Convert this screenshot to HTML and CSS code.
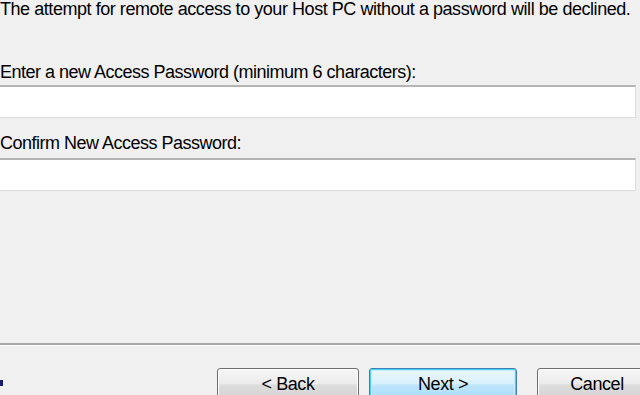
FILE: index.html
```html
<!DOCTYPE html>
<html>
<head>
<meta charset="utf-8">
<link rel="stylesheet" href="styles.css">
</head>
<body>
<div class="dialog">
  <p class="intro">The attempt for remote access to your Host PC without a password will be declined.</p>
  <label class="label first">Enter a new Access Password (minimum 6 characters):</label>
  <div class="field"></div>
  <label class="label second">Confirm New Access Password:</label>
  <div class="field confirm"></div>
  <div class="spacer"></div>
  <div class="separator"></div>
  <div class="footer">
    <span class="mark"></span>
    <button class="btn back">&lt; Back</button>
    <button class="btn next">Next &gt;</button>
    <button class="btn cancel">Cancel</button>
  </div>
</div>
</body>
</html>
```
FILE: styles.css
```css
html, body {
  margin: 0;
  padding: 0;
  background: #f0f0f0;
  overflow: hidden;
}
.dialog {
  width: 640px;
  height: 395px;
  display: flex;
  flex-direction: column;
  font-family: "Liberation Sans", Arial, sans-serif;
  font-size: 18px;
  color: #000;
}
.intro {
  margin: -1px 0 0;
  line-height: 20px;
  white-space: nowrap;
  letter-spacing: -0.45px;
}
.label {
  display: block;
  line-height: 20px;
  white-space: nowrap;
  letter-spacing: -0.5px;
}
.label.first { margin-top: 43px; }
.label.second { margin-top: 15px; }
.field {
  margin-top: 3px;
  margin-left: -2px;
  width: 638px;
  height: 33px;
  box-sizing: border-box;
  background: #fff;
  border: 1px solid #dcdcdc;
  border-top: 2px solid #b4b4b4;
  flex-shrink: 0;
}
.field.confirm { margin-top: 5px; }
.spacer { flex: 1; }
.separator {
  height: 0;
  border-top: 2px solid #a9a9a9;
  border-bottom: 1px solid #ffffff;
  margin-bottom: 22px;
}
.footer {
  display: flex;
  align-items: flex-start;
  height: 27px;
}
.mark {
  flex-shrink: 0;
  width: 3px;
  height: 6px;
  background: #1a1a6e;
  margin-top: 12px;
}
.btn {
  flex-shrink: 0;
  font-family: "Liberation Sans", Arial, sans-serif;
  font-size: 18px;
  letter-spacing: -0.4px;
  color: #000;
  height: 34px;
  border: 1px solid #707070;
  border-radius: 3px;
  background: linear-gradient(#f6f6f6 0%, #ececec 45%, #dddddd 50%, #d2d2d2 100%);
  box-shadow: inset 0 0 0 1px #fcfcfc;
  padding: 2px 0 4px;
  line-height: 20px;
}
.back { margin-left: 214px; width: 142px; }
.next {
  margin-left: 10px;
  width: 148px;
  border-color: #3c7fb1;
  box-shadow: inset 0 0 0 1px #48d0f6, inset 0 0 0 2px #c7ecf9;
  background: linear-gradient(#eaf6fd 0%, #d9f0fc 45%, #bee6fd 50%, #a7d9f5 100%);
}
.cancel { margin-left: 20px; width: 120px; }
```
